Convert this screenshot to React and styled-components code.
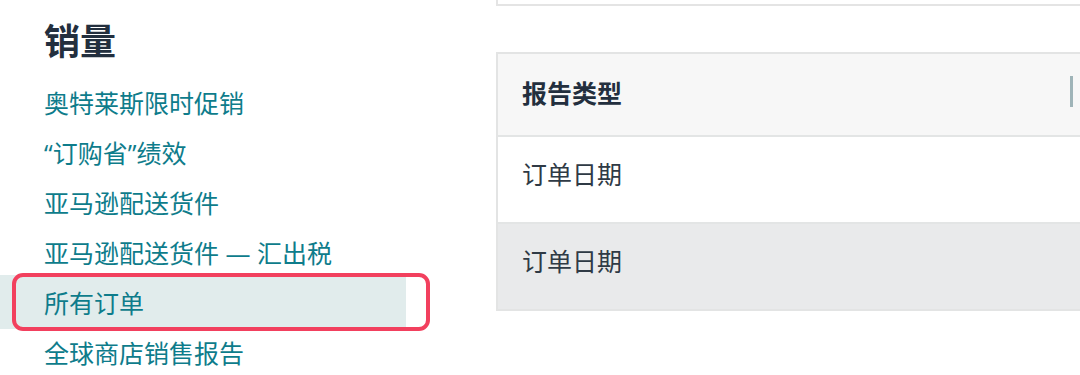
import React from "react";
import styled, { createGlobalStyle } from "styled-components";

const GlobalStyle = createGlobalStyle`
  html, body {
    margin: 0;
    padding: 0;
    background: #ffffff;
    overflow: hidden;
  }
  body {
    font-family: "Open Sans", "Noto Sans CJK SC", sans-serif;
  }
`;

const Page = styled.div`
  display: flex;
  width: 1080px;
  height: 375px;
  overflow: hidden;
`;

const Sidebar = styled.nav`
  width: 496px;
  flex-shrink: 0;
  padding-top: 20px;
  box-sizing: border-box;
`;

const Heading = styled.h2`
  margin: 0 0 13px 44px;
  font-size: 36px;
  line-height: 44px;
  font-weight: 700;
  color: #232f3e;
`;

const LinkList = styled.ul`
  list-style: none;
  margin: 0;
  padding: 0;
`;

const LinkItem = styled.li`
  position: relative;
  width: 406px;
  height: ${(p) => (p.$active ? "54px" : "50px")};
  margin: ${(p) => (p.$active ? "-2px 0" : "0")};
  display: flex;
  align-items: center;
  padding-left: 44px;
  box-sizing: border-box;
  background: ${(p) => (p.$active ? "#e1ecec" : "transparent")};
  font-size: 25px;
  color: #0e7c8b;
  white-space: nowrap;

  ${(p) =>
    p.$active &&
    `
    &::after {
      content: "";
      position: absolute;
      left: 12px;
      right: -24px;
      top: -2px;
      bottom: -2px;
      border: 4px solid #f2405e;
      border-radius: 11px;
    }
  `}
`;

const Main = styled.main`
  flex: 1;
  min-width: 0;
  display: flex;
  flex-direction: column;
`;

const TopBox = styled.div`
  height: 6px;
  margin-right: -20px;
  border: 2px solid #e4e4e4;
  border-top: none;
  box-sizing: border-box;
  margin-bottom: 46px;
`;

const Table = styled.div`
  margin-right: -20px;
  border: 2px solid #e3e4e4;
`;

const Row = styled.div`
  height: ${(p) => p.$h}px;
  display: flex;
  align-items: center;
  padding: ${(p) => (p.$head ? "0 0 6px 24px" : "0 0 14px 24px")};
  box-sizing: border-box;
  background: ${(p) => p.$bg};
  border-top: ${(p) => (p.$head ? "none" : "2px solid #e3e5e5")};
  font-size: 25px;
  font-weight: ${(p) => (p.$head ? 700 : 400)};
  color: ${(p) => (p.$head ? "#232f3e" : "#2f3a45")};
  position: relative;
`;

const ColDivider = styled.span`
  position: absolute;
  left: 572px;
  top: 22px;
  width: 3px;
  height: 31px;
  background: #9fb4b8;
`;

const links = [
  "奥特莱斯限时促销",
  "“订购省”绩效",
  "亚马逊配送货件",
  "亚马逊配送货件 — 汇出税",
  "所有订单",
  "全球商店销售报告",
];

export default function App() {
  return (
    <>
      <GlobalStyle />
      <Page>
        <Sidebar>
          <Heading>销量</Heading>
          <LinkList>
            {links.map((l) => (
              <LinkItem key={l} $active={l === "所有订单"}>
                {l}
              </LinkItem>
            ))}
          </LinkList>
        </Sidebar>
        <Main>
          <TopBox />
          <Table>
            <Row $h={81} $bg="#f7f7f7" $head>
              报告类型
              <ColDivider />
            </Row>
            <Row $h={87} $bg="#ffffff">订单日期</Row>
            <Row $h={87} $bg="#e9eaeb">订单日期</Row>
          </Table>
        </Main>
      </Page>
    </>
  );
}
